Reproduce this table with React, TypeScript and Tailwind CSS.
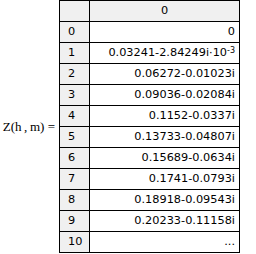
const rows: React.ReactNode[] = [
  '0',
  <>
    0.03241-2.84249i·10<sup className="relative -top-[2px] align-top text-[8px] leading-none">-3</sup>
  </>,
  '0.06272-0.01023i',
  '0.09036-0.02084i',
  '0.1152-0.0337i',
  '0.13733-0.04807i',
  '0.15689-0.0634i',
  '0.1741-0.0793i',
  '0.18918-0.09543i',
  '0.20233-0.11158i',
  '...',
];

export default function App() {
  return (
    <div className="w-[256px] h-[254px] bg-white flex items-start">
      <div className="w-[59px] h-[253px] flex items-center justify-end pr-[4px]">
        <span className="text-[13px] text-black whitespace-nowrap" style={{ fontFamily: '"Liberation Serif", serif' }}>
          Z(h{'\u2009'},{'\u2009'}m) =
        </span>
      </div>
      <div
        className="grid grid-cols-[30px_150px] border-l border-t border-black text-[11.3px] text-black"
        style={{ fontFamily: '"DejaVu Sans", sans-serif' }}
      >
        <div className="h-[21px] border-r border-b border-black bg-[#f0f0f0]" />
        <div className="h-[21px] border-r border-b border-black bg-[#f0f0f0] flex items-center justify-center">0</div>
        {rows.map((value, i) => (
          <div key={i} className="contents">
            <div className="h-[21px] border-r border-b border-black bg-[#f0f0f0] flex items-center pl-[8px]">{i}</div>
            <div className="h-[21px] border-r border-b border-black bg-white flex items-center justify-end pr-[4px] whitespace-nowrap">
              {value}
            </div>
          </div>
        ))}
      </div>
    </div>
  );
}
